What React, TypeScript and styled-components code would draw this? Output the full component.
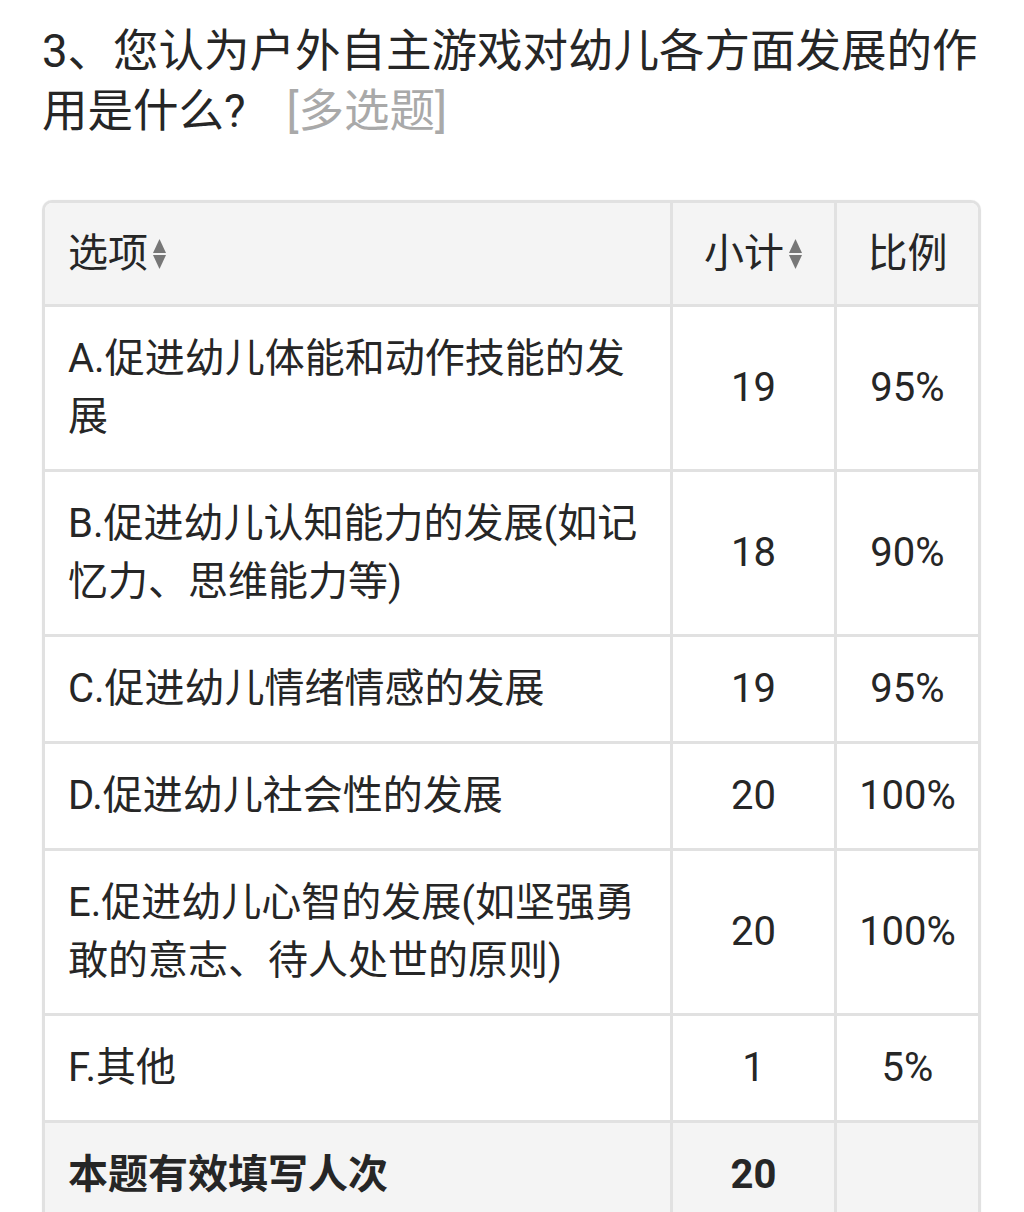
import { Fragment } from "react";
import styled, { createGlobalStyle } from "styled-components";

const GlobalStyle = createGlobalStyle`
	html, body {
		margin: 0;
		padding: 0;
		background: #fff;
	}
	body {
		font-family: Roboto, "Noto Sans CJK SC", sans-serif;
		color: #262626;
	}
`;

const Page = styled.div`
	width: 939px;
	padding: 22px 0 0 42px;
`;

const Question = styled.div`
	font-size: 45.5px;
	line-height: 60px;
	color: #262626;
	margin: 0 -42px 58px 0;
`;

const QType = styled.span`
	color: #a9a9a9;
	margin-left: 41px;
`;

const Frame = styled.div`
	border: 3px solid #e1e1e1;
	border-bottom: none;
	border-radius: 10px 10px 0 0;
	overflow: hidden;
	box-shadow: 0 0 1px rgba(0, 0, 0, 0.12);
`;

const Table = styled.table`
	width: 100%;
	table-layout: fixed;
	border-collapse: separate;
	border-spacing: 0;
	font-size: 40px;
	line-height: 58px;
`;

const Cell = styled.td<{ $center?: boolean; $head?: boolean; $bold?: boolean; $last?: boolean }>`
	padding: ${(p) => (p.$head ? "22px" : "23px")} ${(p) => (p.$center ? "6px" : "22px")} ${(p) => (p.$head ? "21px" : "23px")} ${(p) => (p.$center ? "6px" : "23px")};
	text-align: ${(p) => (p.$center ? "center" : "left")};
	vertical-align: middle;
	background: ${(p) => (p.$head || p.$bold ? "#f4f4f4" : "#fff")};
	font-weight: ${(p) => (p.$bold ? "bold" : "normal")};
	border-bottom: 3px solid #e1e1e1;
	border-right: ${(p) => (p.$last ? "none" : "3px solid #e1e1e1")};
	color: #262626;
	word-break: break-all;
`;

const HeadLabel = styled.span`
	display: inline-flex;
	align-items: center;
	gap: 4px;
`;

function SortIcon() {
	return (
		<svg width="15" height="32" viewBox="0 0 15 32" style={{ filter: "blur(0.5px)", flexShrink: 0 }}>
			<path d="M7.5 1 L14 15 L1 15 Z" fill="#777" />
			<path d="M1 17 L14 17 L7.5 31 Z" fill="#777" />
		</svg>
	);
}

const ROWS = [
	{ label: "A.促进幼儿体能和动作技能的发展", count: 19, pct: "95%" },
	{ label: "B.促进幼儿认知能力的发展(如记忆力、思维能力等)", count: 18, pct: "90%" },
	{ label: "C.促进幼儿情绪情感的发展", count: 19, pct: "95%" },
	{ label: "D.促进幼儿社会性的发展", count: 20, pct: "100%" },
	{ label: "E.促进幼儿心智的发展(如坚强勇敢的意志、待人处世的原则)", count: 20, pct: "100%" },
	{ label: "F.其他", count: 1, pct: "5%" },
];

export default function App() {
	return (
		<Fragment>
			<GlobalStyle />
			<Page>
				<Question>
					3、您认为户外自主游戏对幼儿各方面发展的作用是什么?<QType>[多选题]</QType>
				</Question>
				<Frame>
					<Table>
						<colgroup>
							<col style={{ width: 628 }} />
							<col style={{ width: 164 }} />
							<col />
						</colgroup>
						<thead>
							<tr>
								<Cell as="th" $head><HeadLabel>选项<SortIcon /></HeadLabel></Cell>
								<Cell as="th" $head $center><HeadLabel>小计<SortIcon /></HeadLabel></Cell>
								<Cell as="th" $head $center $last>比例</Cell>
							</tr>
						</thead>
						<tbody>
							{ROWS.map((r, i) => (
								<tr key={i}>
									<Cell>{r.label}</Cell>
									<Cell $center>{r.count}</Cell>
									<Cell $center $last>{r.pct}</Cell>
								</tr>
							))}
							<tr>
								<Cell $bold>本题有效填写人次</Cell>
								<Cell $bold $center>20</Cell>
								<Cell $bold $center $last></Cell>
							</tr>
						</tbody>
					</Table>
				</Frame>
			</Page>
		</Fragment>
	);
}
